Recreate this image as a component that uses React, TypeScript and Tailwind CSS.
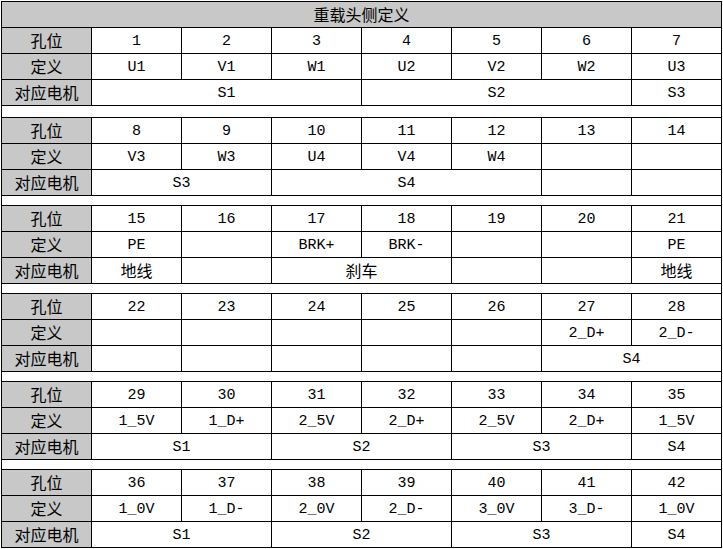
import React from "react";

type Span = [string, number];

interface Block {
  holes: string[];
  defs: string[];
  motors: Span[];
}

const blocks: Block[] = [
  {
    holes: ["1", "2", "3", "4", "5", "6", "7"],
    defs: ["U1", "V1", "W1", "U2", "V2", "W2", "U3"],
    motors: [["S1", 3], ["S2", 3], ["S3", 1]],
  },
  {
    holes: ["8", "9", "10", "11", "12", "13", "14"],
    defs: ["V3", "W3", "U4", "V4", "W4", "", ""],
    motors: [["S3", 2], ["S4", 3], ["", 1], ["", 1]],
  },
  {
    holes: ["15", "16", "17", "18", "19", "20", "21"],
    defs: ["PE", "", "BRK+", "BRK-", "", "", "PE"],
    motors: [["地线", 1], ["", 1], ["刹车", 2], ["", 1], ["", 1], ["地线", 1]],
  },
  {
    holes: ["22", "23", "24", "25", "26", "27", "28"],
    defs: ["", "", "", "", "", "2_D+", "2_D-"],
    motors: [["", 1], ["", 1], ["", 1], ["", 1], ["", 1], ["S4", 2]],
  },
  {
    holes: ["29", "30", "31", "32", "33", "34", "35"],
    defs: ["1_5V", "1_D+", "2_5V", "2_D+", "2_5V", "2_D+", "1_5V"],
    motors: [["S1", 2], ["S2", 2], ["S3", 2], ["S4", 1]],
  },
  {
    holes: ["36", "37", "38", "39", "40", "41", "42"],
    defs: ["1_0V", "1_D-", "2_0V", "2_D-", "3_0V", "3_D-", "1_0V"],
    motors: [["S1", 2], ["S2", 2], ["S3", 2], ["S4", 1]],
  },
];

// white spacer rows between the blocks
const gaps = ["h-[12px]", "h-[10px]", "h-[10px]", "h-[10px]", "h-[10px]"];

const spanClass: Record<number, string> = {
  1: "col-span-1",
  2: "col-span-2",
  3: "col-span-3",
  4: "col-span-4",
};

const cjk = { fontFamily: '"Noto Sans CJK SC", "Noto Sans", sans-serif' };
const mono = { fontFamily: '"Liberation Mono", "Noto Sans CJK SC", monospace' };

function isCjk(s: string) {
  return /[\u4e00-\u9fff]/.test(s);
}

function Cell({ text, span = 1, gray = false }: { text: string; span?: number; gray?: boolean }) {
  const zh = isCjk(text);
  return (
    <div
      className={`${spanClass[span]} h-[26px] border-r border-b border-black flex items-center justify-center leading-normal text-black overflow-hidden ${
        gray ? "bg-[#c8c8c8]" : "bg-white"
      } ${zh ? "text-[16px] pb-[2px]" : "text-[15px] pt-[3px]"}`}
      style={zh ? cjk : mono}
    >
      {text}
    </div>
  );
}

export default function App() {
  return (
    <div className="w-[723px] h-[549px] bg-white pt-px pl-px">
      <div className="grid grid-cols-[repeat(8,90px)] w-fit border-l border-t border-black">
        <div
          className="col-span-8 h-[26px] bg-[#c8c8c8] border-r border-b border-black flex items-center justify-center text-[16px] leading-normal pb-[2px] overflow-hidden"
          style={cjk}
        >
          重载头侧定义
        </div>
        {blocks.map((b, i) => (
          <React.Fragment key={i}>
            <Cell text="孔位" gray />
            {b.holes.map((h, j) => (
              <Cell key={`h${j}`} text={h} />
            ))}
            <Cell text="定义" gray />
            {b.defs.map((d, j) => (
              <Cell key={`d${j}`} text={d} />
            ))}
            <Cell text="对应电机" gray />
            {b.motors.map(([m, s], j) => (
              <Cell key={`m${j}`} text={m} span={s} />
            ))}
            {i < blocks.length - 1 && (
              <div className={`col-span-8 ${gaps[i]} border-r border-b border-black bg-white`} />
            )}
          </React.Fragment>
        ))}
      </div>
    </div>
  );
}
